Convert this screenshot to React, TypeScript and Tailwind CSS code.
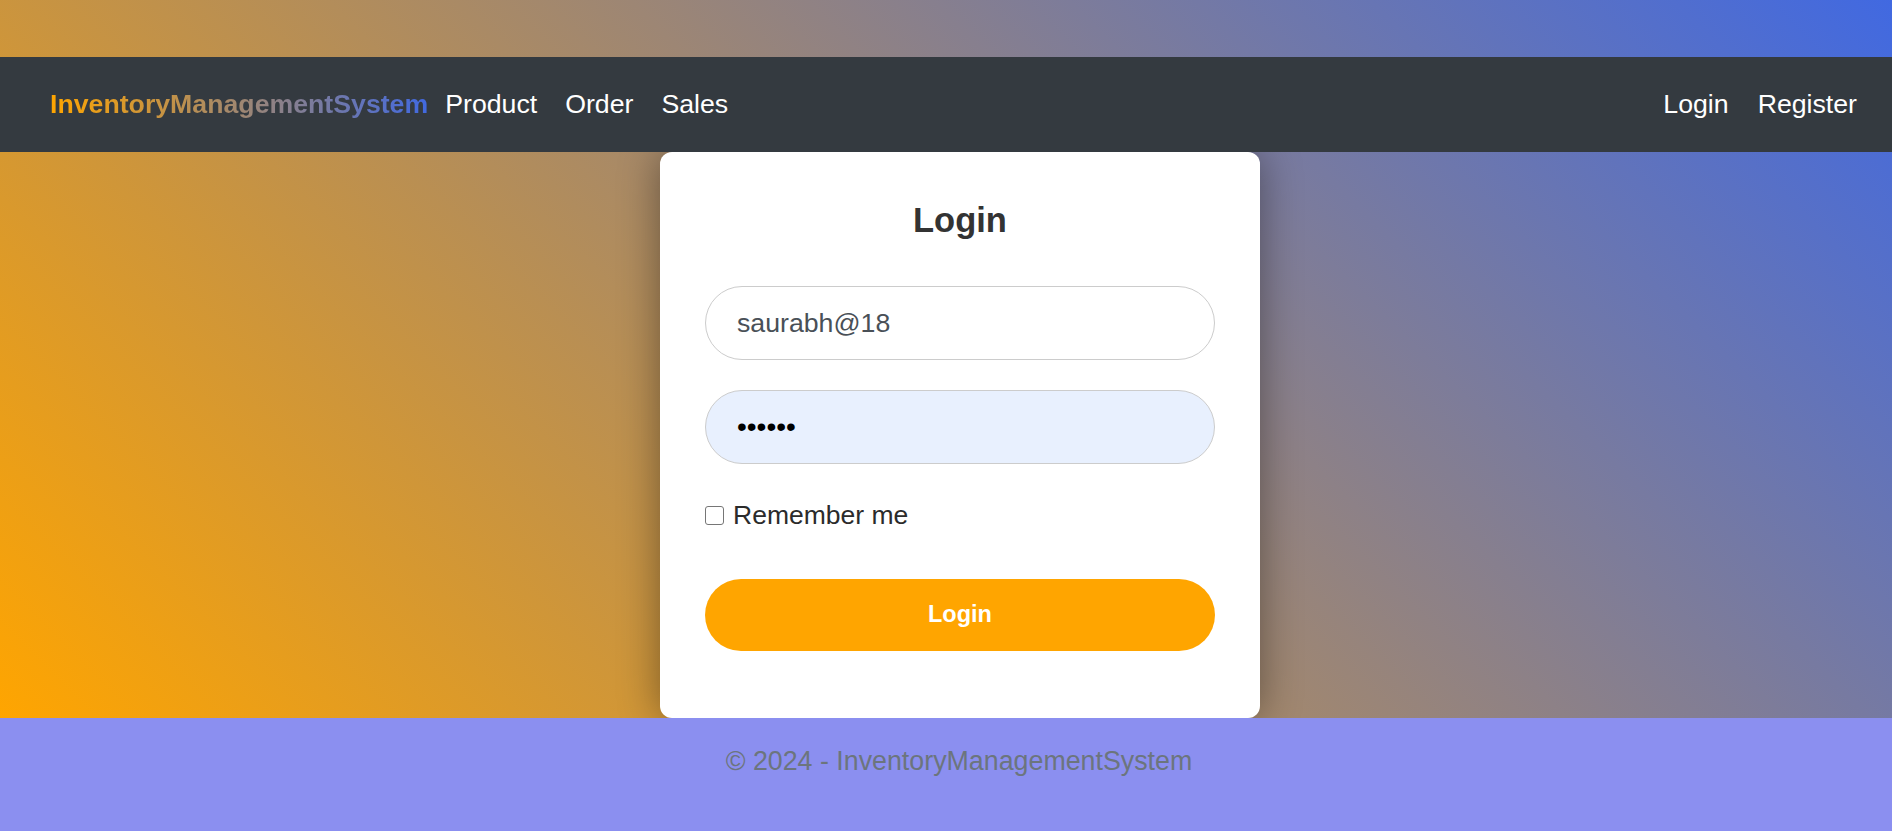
import React from "react";

export default function App() {
  return (
    <div
      className="w-full h-[831px] flex flex-col overflow-hidden"
      style={{ fontFamily: '"Liberation Sans", Arial, sans-serif' }}
    >
      <div className="flex-1 flex flex-col bg-[linear-gradient(45deg,#ffa500,#4169e1)]">
        <div className="h-[57px] shrink-0" />
        <nav className="relative z-10 h-[95px] shrink-0 bg-[#343a40] flex items-center pl-[50px] pr-[35px]">
          <span className="text-[26.7px] font-bold bg-[linear-gradient(to_right,#ffa500,#4169e1)] bg-clip-text text-transparent leading-none">
            InventoryManagementSystem
          </span>
          <div className="flex items-center gap-[28px] ml-[17px] text-white text-[26.7px] leading-none">
            <span>Product</span>
            <span>Order</span>
            <span>Sales</span>
          </div>
          <div className="ml-auto flex items-center gap-[29px] text-white text-[26.7px] leading-none">
            <span>Login</span>
            <span>Register</span>
          </div>
        </nav>
        <main className="flex-1 flex justify-center pl-[28px]">
          <div className="w-[600px] h-full bg-white rounded-[12px] shadow-[0_0_40px_rgba(0,0,0,0.4)] px-[45px] pt-[48px] flex flex-col">
            <h2 className="text-center text-[34.5px] font-bold text-[#333333] leading-[40px] h-[40px]">
              Login
            </h2>
            <div className="mt-[46px] h-[74px] rounded-full border border-[#cccccc] bg-white flex items-center pl-[31px] text-[26.7px] text-[#495057]">
              saurabh@18
            </div>
            <div className="mt-[30px] h-[74px] rounded-full border border-[#cccccc] bg-[#e8f0fe] flex items-center pl-[31px] text-[28px] text-black leading-none">
              ••••••
            </div>
            <label className="mt-[36px] flex items-center gap-[9px] h-[31px]">
              <span className="w-[19px] h-[19px] rounded-[3px] border-[1.5px] border-[#767676] bg-white shrink-0" />
              <span className="text-[26.5px] text-[#2b2b2b] leading-none">Remember me</span>
            </label>
            <button className="mt-[48px] h-[72px] rounded-full bg-[#ffa500] text-white font-bold text-[23.5px]">
              Login
            </button>
          </div>
        </main>
      </div>
      <footer className="h-[113px] shrink-0 bg-[#8b8ff0] flex justify-center pt-[30px] pl-[26px]">
        <span className="text-[26.8px] text-[#6c757d] leading-none h-fit">
          © 2024 - InventoryManagementSystem
        </span>
      </footer>
    </div>
  );
}
